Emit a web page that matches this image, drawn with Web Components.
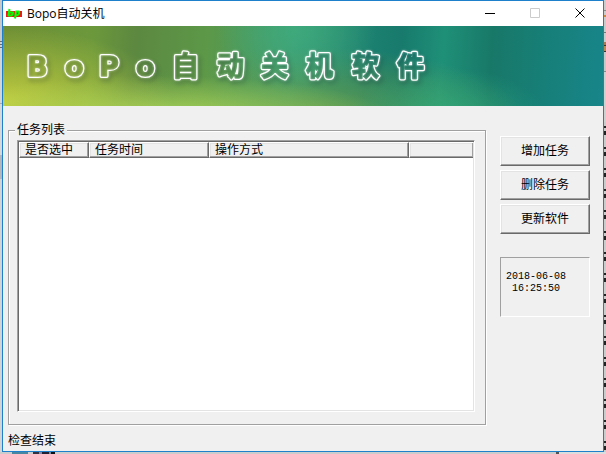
<!DOCTYPE html>
<html lang="zh-CN">
<head>
<meta charset="utf-8">
<meta name="viewport" content="width=device-width, initial-scale=1">
<title>Bopo自动关机</title>
<style>
html, body { height: 100%; }
body { margin: 0; overflow: hidden; font: 12px/14px "Liberation Sans", "Noto Sans CJK SC", sans-serif; color: #000; }
</style>
</head>
<body>
<bopo-desktop>
  <bopo-window>
    <title-bar slot="title">Bopo自动关机</title-bar>
    <bopo-banner slot="banner"></bopo-banner>
    <task-list></task-list>
    <side-panel>
      <classic-button>增加任务</classic-button>
      <classic-button>删除任务</classic-button>
      <classic-button>更新软件</classic-button>
      <clock-panel slot="clock"></clock-panel>
    </side-panel>
    <span slot="status">检查结束</span>
  </bopo-window>
</bopo-desktop>
<script>
const define = (name, markup) => {
  const template = document.createElement('template');
  template.innerHTML = markup;
  customElements.define(name, class extends HTMLElement {
    constructor() {
      super();
      this.attachShadow({ mode: 'open' }).append(template.content.cloneNode(true));
    }
  });
};

/* Slivers of other windows show around the main one. */
define('bopo-desktop', `
<style>
:host { display: grid; grid-template: minmax(0, 1fr) 2px / 2px minmax(0, 1fr) 2px; height: 100vh; background: #c4c4c4; }
.left { background: linear-gradient(#c8c8c8 0 41px, #6c6c6c 41px 42px, #d0d0d0 42px 44px, #6c6c6c 44px 45px, #d0d0d0 45px 47px, #6c6c6c 47px 48px, #d4d4d4 48px 103px, #aaa 103px 104px, #d8d8d8 104px 155px, #b4b8bc 155px 179px, #d4d4d4 179px); }
.right { background:
  linear-gradient(#ccc 0 10px, #888 10px 11px, #ccc 11px 15px, #c84 15px 17px, #ccc 17px 32px, #777 32px 33px, #ccc 33px 42px, #a75 42px 45px, #333 45px 46px, #b85 46px 51px, #333 51px 52px, #c8c8c8 52px 71px, #888 71px 72px, #d0d0d0 72px 122px, transparent 122px),
  repeating-linear-gradient(#222 0 2px, #ccc 2px 5px, #222 5px 9px, #ccc 9px 21px); }
.bottom { grid-column: 1 / 4; background: linear-gradient(90deg, #ccc 0 12px, #48879f 12px 28px, #ccc 28px 33px, #334 33px 39px, #88a 39px 42px, #223 42px 49px, #789 49px 51px, #111 51px 55px, #ccc 55px 556px, #555 556px 559px, #ddd 559px); }
</style>
<div class="left"></div><slot></slot><div class="right"></div><div class="bottom"></div>`);

define('bopo-window', `
<style>
:host { display: grid; grid-template-rows: 25px 80px minmax(0, 1fr) 25px; box-sizing: border-box; min-width: 0; border: 1px solid #1e7fcb; background: #f0f0f0; }
main { display: flex; gap: 14px; padding: 17px 13px 0 5px; min-height: 0; }
footer { padding: 8px 5px 0; line-height: 14px; }
</style>
<slot name="title"></slot>
<slot name="banner"></slot>
<main><slot></slot></main>
<footer role="status"><slot name="status"></slot></footer>`);

define('title-bar', `
<style>
:host { display: flex; align-items: center; background: #fff; font: 12px/24px "Open Sans", "Noto Sans CJK SC", sans-serif; }
.logo { width: 16px; height: 16px; margin: 0 5px 0 3px; }
h1 { flex: 1; margin: 0; font: inherit; }
button { width: 45px; height: 25px; padding: 0; border: 0; background: none; display: grid; place-items: center; }
</style>
<svg class="logo" viewBox="0 0 16 16" aria-hidden="true">
  <path fill="#f01818" d="M0 5h16v6H0z" shape-rendering="crispEdges"/>
  <path fill="none" stroke="#0f0" stroke-width="2" stroke-linejoin="round" d="M3.500 3L2.500 9.500H5.500Q7 9 7 6.500H3.500M9 12.500L10 5.500H13Q14 9 10 9.500"/>
</svg>
<h1><slot></slot></h1>
<button type="button" aria-label="最小化"><svg width="11" height="11" shape-rendering="crispEdges"><path d="M0 5h10v1H0z"/></svg></button>
<button type="button" aria-label="最大化" disabled><svg width="11" height="11"><path fill="none" stroke="#ccc" d="M.5.5h9v9h-9z"/></svg></button>
<button type="button" aria-label="关闭"><svg width="11" height="11"><path fill="none" stroke="#000" d="M.5.5l9 9M9.500.5l-9 9"/></svg></button>`);

/* The mask cuts the fattened letters out of slightly fatter ones, so only their outline is left.
   Stroke widths on the shared text come from whichever element paints it. */
define('bopo-banner', `
<style>
:host { display: block; overflow: hidden; background:
  radial-gradient(ellipse 230px 40px at 26% 112%, #b8e05ccc, #a8d85800),
  radial-gradient(ellipse 170px 75px at 0% 95%, #c0cc40, #a8b84000),
  radial-gradient(ellipse 100px 50px at 74% 115%, #30b080aa, #30a87800),
  radial-gradient(ellipse 80px 60px at 49% 5%, #40b080aa, #40b08000),
  radial-gradient(ellipse 210px 75px at 52% 120%, #689c48ee, #609c4c00),
  linear-gradient(94deg, #6e8e34 0, #6c983c 15%, #5c8840 22%, #5c9848 34%, #3c9c74 48%, #1c8070 61%, #177a6c 66%, #1f9078 73%, #187868 81%, #177f78 90%, #17858a 100%); }
svg { display: block; width: 600px; height: 80px; }
text { font: bold 27px "DejaVu Sans", "Noto Sans CJK SC", sans-serif; stroke-linejoin: round; }
.mark { filter: drop-shadow(0 0 1px #fff8) drop-shadow(2px 3px 2px #1236); }
</style>
<svg viewBox="0 0 600 80">
  <defs>
    <mask id="hollow" maskUnits="userSpaceOnUse" x="0" y="0" width="600" height="80">
      <path fill="#fff" d="M0 0h600v80H0z"/>
      <use href="#name" fill="#000" stroke="#000" stroke-width="1.500"/>
    </mask>
  </defs>
  <g class="mark"><g mask="url(#hollow)"><g fill="#fff" stroke="#fff" stroke-width="4">
    <text id="name" y="50" x="24 62 96 133 169 214 258 303 349 394">BoPo自动关机软件</text>
  </g></g></g>
</svg>`);

define('task-list', `
<style>
:host { display: flex; flex: 1; min-width: 0; padding-bottom: 1px; }
fieldset { flex: 1; display: flex; min-width: 0; margin: 0; padding: 3px 10px 12px 8px; border: 1px solid #a0a0a0; box-shadow: 1px 1px 0 #fff, inset 1px 1px 0 #fff; }
legend { margin-left: -2px; padding: 0 2px; line-height: 14px; background: #f0f0f0; }
.list { flex: 1; min-width: 0; background: #fff; border: 1px solid; border-color: #a0a0a0 #fff #fff #a0a0a0; box-shadow: inset 1px 1px 0 #696969, inset -1px -1px 0 #e3e3e3; padding: 1px; }
table { width: 100%; table-layout: fixed; border-collapse: separate; border-spacing: 0; }
th { height: 16px; box-sizing: border-box; padding: 1px 0 0 5px; overflow: hidden; text-align: left; font-weight: normal; line-height: 13px; background: #f0f0f0; border: 1px solid; border-color: #fff #696969 #696969 #fff; box-shadow: inset -1px -1px 0 #a0a0a0, inset 1px 1px 0 #e3e3e3; }
th:last-child { border-right: 0; }
.c1 { width: 70px; } .c2 { width: 120px; } .c3 { width: 200px; }
</style>
<fieldset>
  <legend>任务列表</legend>
  <div class="list">
    <table>
      <colgroup><col class="c1"><col class="c2"><col class="c3"><col></colgroup>
      <thead><tr><th scope="col">是否选中</th><th scope="col">任务时间</th><th scope="col">操作方式</th><th></th></tr></thead>
      <tbody></tbody>
    </table>
  </div>
</fieldset>`);

define('side-panel', `
<style>
:host { display: flex; flex-direction: column; width: 90px; padding-top: 13px; }
.actions { display: grid; gap: 4px; margin-bottom: 23px; }
</style>
<div class="actions"><slot></slot></div>
<slot name="clock"></slot>`);

define('classic-button', `
<style>
:host { display: block; }
button { display: block; width: 100%; height: 30px; box-sizing: border-box; padding: 0; font: inherit; color: inherit; background: #f0f0f0; border: 1px solid; border-color: #fff #696969 #696969 #fff; box-shadow: inset -1px -1px 0 #a0a0a0, inset 1px 1px 0 #e3e3e3; }
</style>
<button type="button"><slot></slot></button>`);

define('clock-panel', `
<style>
:host { display: block; height: 60px; box-sizing: border-box; padding: 13px 5px 12px; border: 1px solid; border-color: #a0a0a0 #fff #fff #a0a0a0; font: 10px/12px "Liberation Mono", monospace; }
time { display: block; }
.hour { padding-left: 6px; }
</style>
<time datetime="2018-06-08">2018-06-08</time>
<time class="hour" datetime="16:25:50">16:25:50</time>`);
</script>
</body>
</html>
